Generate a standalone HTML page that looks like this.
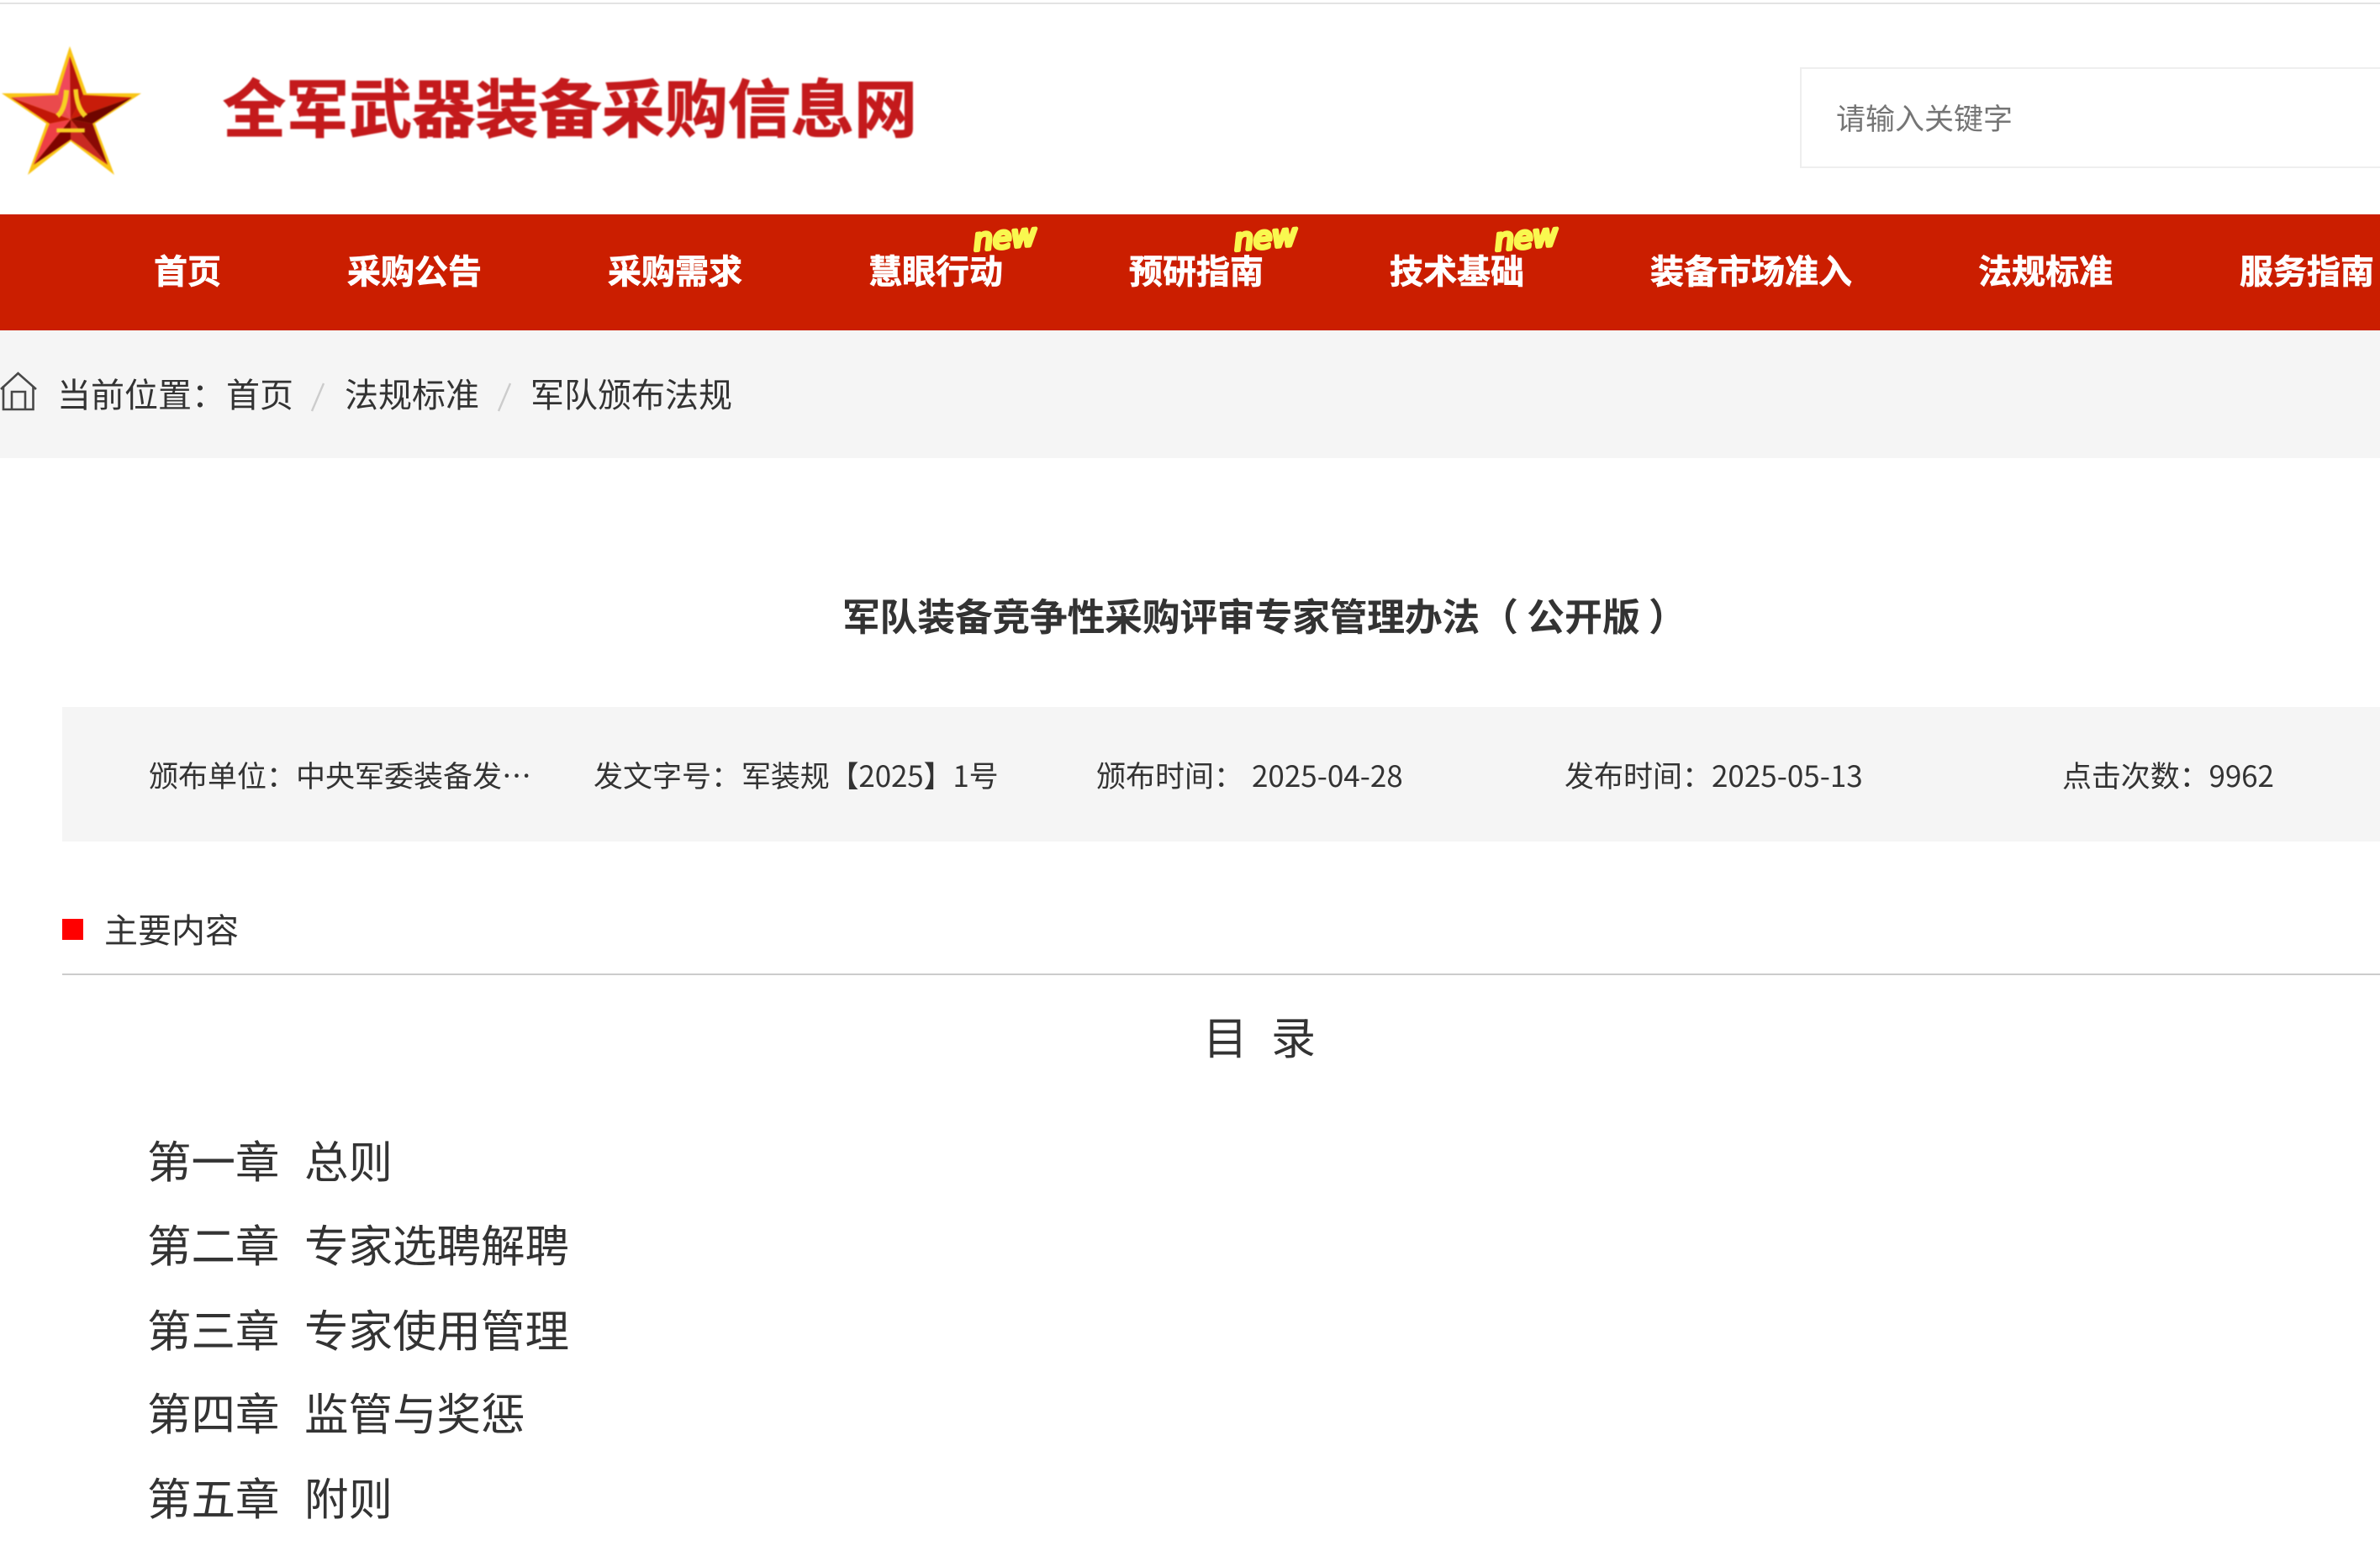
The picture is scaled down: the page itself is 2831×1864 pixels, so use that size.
<!DOCTYPE html>
<html lang="zh-CN"><head><meta charset="utf-8"><title>全军武器装备采购信息网</title>
<style>
html,body{margin:0;padding:0;background:#fff}
body{width:2831px;height:1864px;overflow:hidden;position:relative;font-family:"Noto Sans CJK SC","Liberation Sans",sans-serif;color:#333}
.t{position:absolute;white-space:nowrap;line-height:60px;height:60px}
.b{position:absolute}
.n{font-size:40px;font-weight:700;color:#fff;top:290px;-webkit-text-stroke:.7px #fff}
.c{font-size:40px;top:437px}
.m{font-size:35px;top:892px}
.h{font-size:52.5px;left:175px}
.h span{display:inline-block;width:187px}
.ti{font-size:45px;font-weight:700;top:701px}
svg{position:absolute;overflow:visible}
</style></head><body>
<div class="b" style="left:0;top:3px;width:2831px;height:2px;background:#e3e3e3"></div>

<svg style="left:0;top:0;filter:blur(.7px)" width="180" height="220" viewBox="0 0 180 220">
<polygon points="83,55 103,111 168,111 113,147 136,208 84,168 33,208 55,147 2,111 65,111" fill="#f9c516"/>
<polygon points="83,67 84,142 69,113" fill="#f0485a"/>
<polygon points="83,67 84,142 99,113" fill="#b5120c"/>
<polygon points="157,116 99,113 84,142" fill="#c81c0a"/>
<polygon points="157,116 84,142 110,147" fill="#6f0500"/>
<polygon points="128,196 110,147 84,142" fill="#8a0a05"/>
<polygon points="128,196 84,142 84,166" fill="#c92a22"/>
<polygon points="40,196 84,166 84,142" fill="#7f0300"/>
<polygon points="40,196 84,142 59,147" fill="#ee3f45"/>
<polygon points="13,116 59,147 84,142" fill="#c21707"/>
<polygon points="13,116 84,142 69,113" fill="#ea4a4c"/>
<text x="85" y="136" text-anchor="middle" font-size="38" font-weight="700" fill="#f7cf22" stroke="#f7cf22" stroke-width="1" font-family="Noto Sans CJK SC,sans-serif">八</text>
<text x="84" y="169" text-anchor="middle" font-size="36" font-weight="700" fill="#f7cf22" font-family="Noto Sans CJK SC,sans-serif">一</text>
</svg>

<div class="t" style="left:265px;top:70px;height:110px;line-height:110px;font-size:75px;font-weight:700;color:#c41a1c;letter-spacing:.1px;-webkit-text-stroke:1px #c41a1c;filter:blur(.7px)">全军武器装备采购信息网</div>

<div class="b" style="left:2141px;top:80px;width:800px;height:116px;border:2px solid #eee;background:#fff"></div>
<div class="t" style="left:2184px;top:110px;font-size:35px;color:#757575">请输入关键字</div>

<div class="b" style="left:0;top:255px;width:2831px;height:138px;background:#cb1e00"></div>
<div class="t n" style="left:183px">首页</div>
<div class="t n" style="left:413px">采购公告</div>
<div class="t n" style="left:723px">采购需求</div>
<div class="t n" style="left:1033px">慧眼行动</div>
<div class="t n" style="left:1343px">预研指南</div>
<div class="t n" style="left:1653px">技术基础</div>
<div class="t n" style="left:1963px">装备市场准入</div>
<div class="t n" style="left:2353px">法规标准</div>
<div class="t n" style="left:2664px">服务指南</div>
<svg style="left:0;top:0" width="2831" height="320">
<g font-family="DejaVu Sans,Liberation Sans,sans-serif" font-size="36" font-style="italic" fill="#f9f84f" stroke="#f9f84f" stroke-width="4.500" stroke-linejoin="round" stroke-linecap="round">
<text transform="translate(1159 298) rotate(-5)" textLength="75" lengthAdjust="spacingAndGlyphs">new</text>
<text transform="translate(1469 298) rotate(-5)" textLength="75" lengthAdjust="spacingAndGlyphs">new</text>
<text transform="translate(1779 298) rotate(-5)" textLength="75" lengthAdjust="spacingAndGlyphs">new</text>
</g></svg>

<div class="b" style="left:0;top:393px;width:2831px;height:152px;background:#f5f5f5"></div>
<svg style="left:0;top:440px" width="46" height="50" viewBox="0 440 46 50" fill="none" stroke="#484848" stroke-width="2.600">
<path d="M1 463 L21.500 444 L43 463"/><path d="M4 459 V487 H39.500 V459"/><path d="M14 487 V466 H30 V487"/>
</svg>
<div class="t c" style="left:68px">当前位置：</div>
<div class="t c" style="left:269px">首页</div>
<svg style="left:0;top:0" width="700" height="500" stroke="#ccc" stroke-width="2.400">
<line x1="371" y1="489" x2="385" y2="456"/><line x1="593" y1="489" x2="607" y2="456"/>
</svg>
<div class="t c" style="left:410px">法规标准</div>
<div class="t c" style="left:631px">军队颁布法规</div>

<div class="t ti" style="left:1002px;letter-spacing:-.42px">军队装备竞争性采购评审专家管理办法</div>
<div class="t ti" style="left:1761px">（</div>
<div class="t ti" style="left:1816px">公开版</div>
<div class="t ti" style="left:1961px">）</div>

<div class="b" style="left:74px;top:841px;width:2757px;height:160px;background:#f5f5f5"></div>
<div class="t m" style="left:177px">颁布单位：中央军委装备发…</div>
<div class="t m" style="left:706px"><span>发文字号：</span><span style="margin-left:1px;letter-spacing:-.15px">军装规【2025】1号</span></div>
<div class="t m" style="left:1304px">颁布时间：</div>
<div class="t m" style="left:1489px">2025-04-28</div>
<div class="t m" style="left:1861px">发布时间：2025-05-13</div>
<div class="t m" style="left:2453px;letter-spacing:-.1px">点击次数：9962</div>

<div class="b" style="left:74px;top:1093px;width:25px;height:25px;background:#f00"></div>
<div class="t" style="left:124px;top:1074px;font-size:40px">主要内容</div>
<div class="b" style="left:74px;top:1158px;width:2757px;height:2px;background:#ccc"></div>

<div class="t" style="left:1431px;top:1202px;font-size:53px">目</div>
<div class="t" style="left:1512px;top:1202px;font-size:53px">录</div>

<div class="t h" style="top:1349px"><span>第一章</span>总则</div>
<div class="t h" style="top:1449px"><span>第二章</span>专家选聘解聘</div>
<div class="t h" style="top:1550px"><span>第三章</span>专家使用管理</div>
<div class="t h" style="top:1649px"><span>第四章</span>监管与奖惩</div>
<div class="t h" style="top:1750px"><span>第五章</span>附则</div>
</body></html>
